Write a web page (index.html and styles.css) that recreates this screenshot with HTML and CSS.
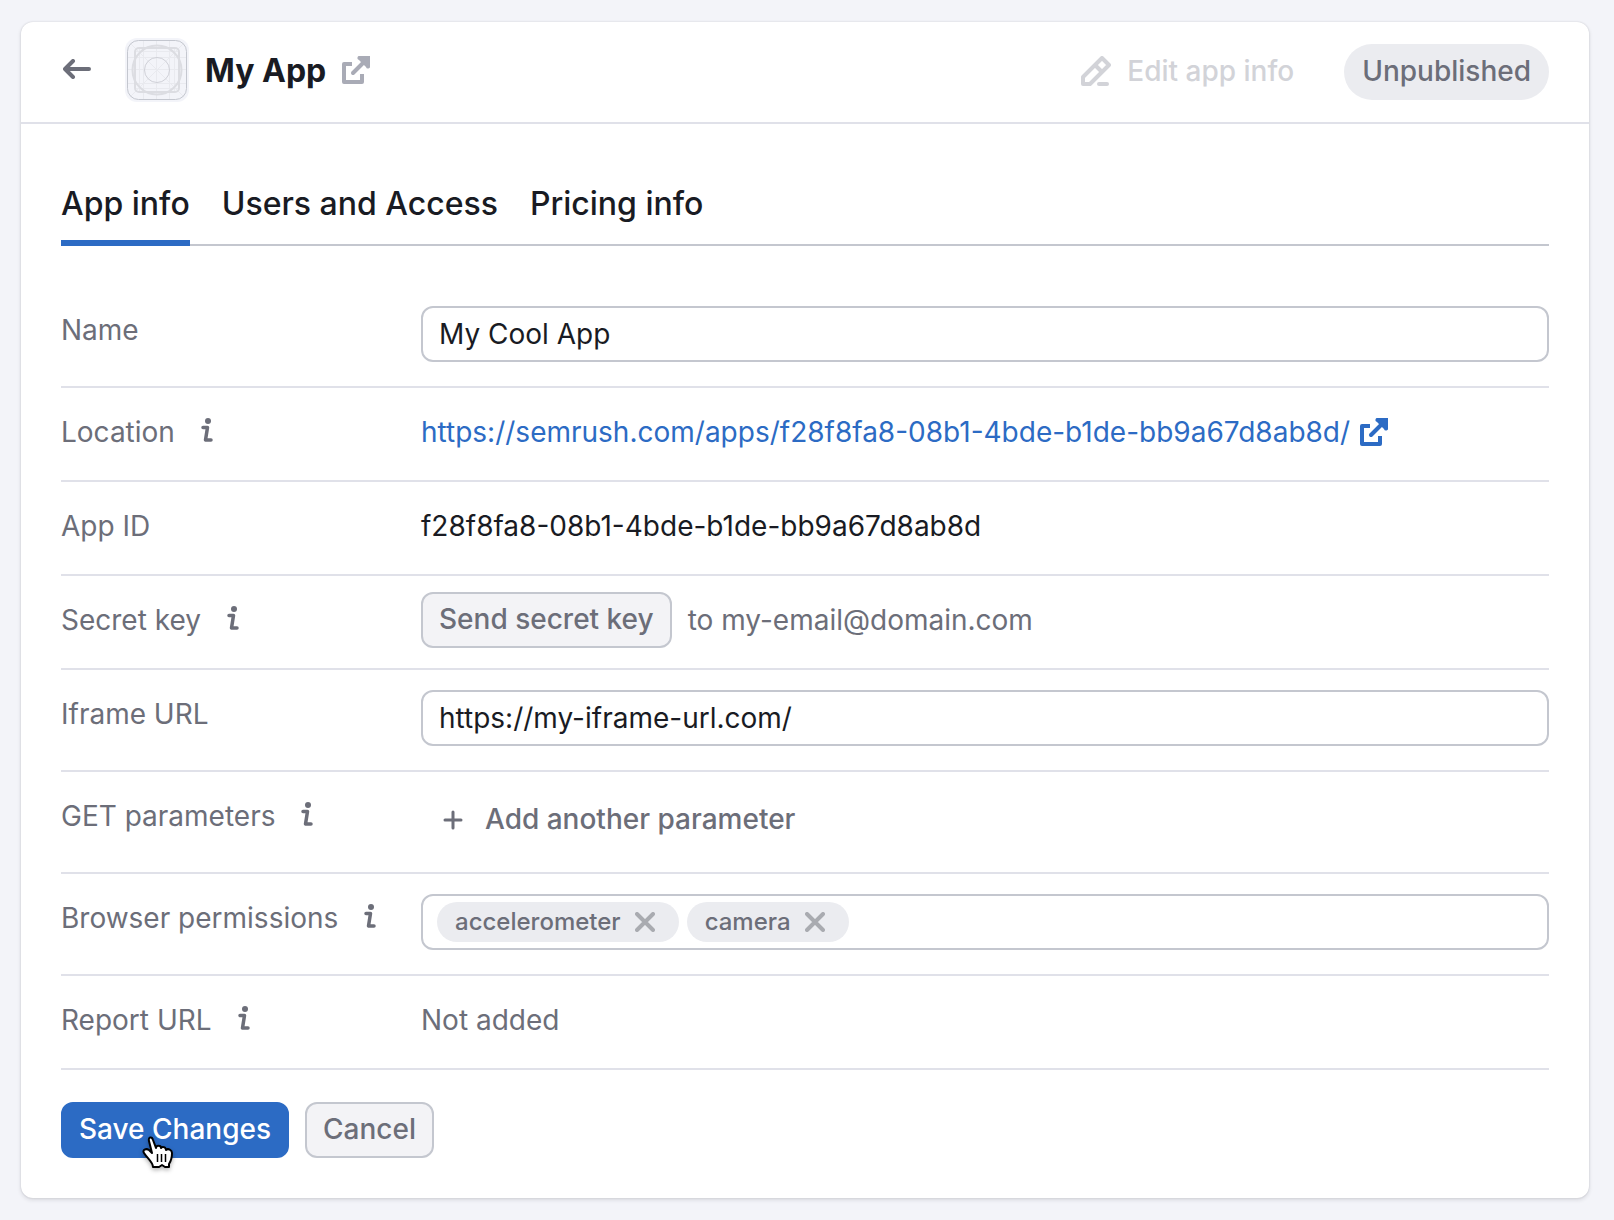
FILE: index.html
```html
<!DOCTYPE html>
<html lang="en">
<head>
<meta charset="utf-8">
<meta name="viewport" content="width=device-width, initial-scale=1">
<title>My App</title>
<link rel="stylesheet" href="styles.css">
</head>
<body>
<svg class="sprite" aria-hidden="true">
  <symbol id="info" viewBox="0 0 12 24">
    <circle cx="7" cy="3" r="3"/>
    <path d="M2 9.500H6.500L4.500 22H10" fill="none" stroke="currentColor" stroke-width="3.500" stroke-linecap="round" stroke-linejoin="round"/>
  </symbol>
  <symbol id="external" viewBox="0 0 28 28">
    <path d="M10 8H2V26H20V18" fill="none" stroke="currentColor" stroke-width="4" stroke-linejoin="round"/>
    <path d="M11 17L25 3" fill="none" stroke="currentColor" stroke-width="4" stroke-linecap="round"/>
    <path d="M18 0H28V10a2 2 0 0 1-4 1L17 4a2 2 0 0 1 1-4z"/>
  </symbol>
  <symbol id="cross" viewBox="0 0 20 20">
    <path d="M2 2L18 18M18 2L2 18" fill="none" stroke="currentColor" stroke-width="4" stroke-linecap="round"/>
  </symbol>
</svg>
<main class="card">
  <header class="header">
    <a class="back" href="#" aria-label="Back">
      <svg width="28" height="20" viewBox="0 0 28 20" fill="none" stroke="currentColor" stroke-width="4" stroke-linecap="round" stroke-linejoin="round"><path d="M26 10H3M10 2L2 10L10 18"/></svg>
    </a>
    <svg class="app-icon" width="64" height="64" viewBox="0 0 64 64" fill="none" aria-hidden="true">
      <rect width="64" height="64" rx="12" fill="#f3f4f9"/>
      <g stroke="#e9eaef">
        <path d="M18.500 2V62M31.500 2V62M44.500 2V62M2 19.500H62M2 31.500H62M2 45.500H62M14.500 10V54M49.500 10V54M10 13.500H54M10 50.500H54"/>
        <path d="M5 5L59 59M59 5L5 59"/>
      </g>
      <g stroke="#dcdde2" stroke-width="2">
        <rect x="10" y="10" width="44" height="44" rx="4"/>
        <circle cx="32" cy="32" r="24.500"/>
        <circle cx="32" cy="32" r="12.500" stroke="#cfd0d7" stroke-width="1"/>
      </g>
      <rect x="2.500" y="2.500" width="59" height="59" rx="11" stroke="#c4c7cf"/>
    </svg>
    <h1 class="title">My App</h1>
    <a class="open" href="#" aria-label="Open app"><svg width="28" height="28" fill="currentColor"><use href="#external"/></svg></a>
    <button class="edit" type="button" disabled>
      <svg width="30" height="30" viewBox="0 0 30 30" fill="none" stroke="currentColor" stroke-width="4" stroke-linejoin="round"><path d="M2 28V21L21 2L28 9L9 28Z"/><path d="M14 9L21 16"/><path d="M18 28H26" stroke-linecap="round"/></svg>
      Edit app info
    </button>
    <span class="status">Unpublished</span>
  </header>
  <div class="content">
    <div class="tabs" role="tablist">
      <button class="tab tab-active" type="button" role="tab" aria-selected="true">App info</button>
      <button class="tab" type="button" role="tab" aria-selected="false">Users and Access</button>
      <button class="tab" type="button" role="tab" aria-selected="false">Pricing info</button>
    </div>
    <form class="form">
      <div class="row">
        <label class="label" for="name">Name</label>
        <div class="control"><input class="input" id="name" type="text" value="My Cool App"></div>
      </div>
      <div class="row">
        <div class="label">Location <svg class="info"><use href="#info"/></svg></div>
        <div class="value"><a class="link" href="#">https://semrush.com/apps/f28f8fa8-08b1-4bde-b1de-bb9a67d8ab8d/<svg width="28" height="28" fill="currentColor"><use href="#external"/></svg></a></div>
      </div>
      <div class="row">
        <div class="label">App ID</div>
        <div class="value">f28f8fa8-08b1-4bde-b1de-bb9a67d8ab8d</div>
      </div>
      <div class="row">
        <div class="label">Secret key <svg class="info"><use href="#info"/></svg></div>
        <div class="control control-tight"><button class="button" type="button">Send secret key</button><span class="muted">to my-email@domain.com</span></div>
      </div>
      <div class="row">
        <label class="label" for="iframe">Iframe URL</label>
        <div class="control"><input class="input" id="iframe" type="text" value="https://my-iframe-url.com/"></div>
      </div>
      <div class="row">
        <div class="label">GET parameters <svg class="info"><use href="#info"/></svg></div>
        <div class="control">
          <button class="add" type="button"><svg width="20" height="20" viewBox="0 0 20 20" fill="none" stroke="currentColor" stroke-width="3" stroke-linecap="round"><path d="M10 2V18M2 10H18"/></svg><span class="add-text">Add another parameter</span></button>
        </div>
      </div>
      <div class="row">
        <label class="label" for="permissions">Browser permissions <svg class="info"><use href="#info"/></svg></label>
        <div class="control">
          <div class="tag-box">
            <span class="tag">accelerometer<button class="remove" type="button" aria-label="Remove accelerometer"><svg width="20" height="20"><use href="#cross"/></svg></button></span>
            <span class="tag">camera<button class="remove" type="button" aria-label="Remove camera"><svg width="20" height="20"><use href="#cross"/></svg></button></span>
            <input class="tag-input" id="permissions" type="text">
          </div>
        </div>
      </div>
      <div class="row">
        <div class="label">Report URL <svg class="info"><use href="#info"/></svg></div>
        <div class="value muted">Not added</div>
      </div>
      <div class="actions">
        <button class="button primary" type="submit">Save Changes
          <svg class="cursor" width="32" height="34" viewBox="0 0 32 34" aria-hidden="true"><path d="M11 31C11 26 5 22 2 17C0 14 4 12 7 14L10 17L7 5C6 1 10 0 11 4L14 12C14 9 19 9 19 12C20 10 24 11 24 14C26 12 30 14 30 17C30 22 29 25 27 28V31H23L20 29L17 31Z" fill="#fff" stroke="#000" stroke-width="2" stroke-linejoin="round"/><path d="M15.500 18V26M19.500 18V26M23.500 18V26" stroke="#000" stroke-width="1.500"/></svg>
        </button>
        <button class="button" type="button">Cancel</button>
      </div>
    </form>
  </div>
</main>
</body>
</html>
```
FILE: styles.css
```css
* { box-sizing: border-box; }

body {
  margin: 0;
  padding: 22px 25px 22px 21px;
  background: #f3f4f9;
  color: #191b23;
  font: 28px/40px Inter, "Liberation Sans", sans-serif;
}

button, input { font: inherit; color: inherit; }
button { margin: 0; padding: 0; border: 0; background: none; white-space: nowrap; }
svg { display: block; flex: none; }
.sprite { position: absolute; width: 0; height: 0; }

.card {
  background: #fff;
  border-radius: 12px;
  box-shadow: 0 0 2px rgba(25, 27, 35, 0.16), 0 2px 4px rgba(25, 27, 35, 0.12);
}

.header {
  display: flex;
  align-items: center;
  min-height: 102px;
  padding: 0 40px;
  border-bottom: 2px solid #e0e1e9;
}
.back { margin: 0 34px 0 2px; padding-bottom: 6px; color: #6c6e79; }
.app-icon { margin: -4px 16px 0 0; }
.title { margin: 0; padding-bottom: 2px; font-size: 32px; font-weight: 700; }
.open { margin-left: 16px; padding-bottom: 4px; color: #a9abb6; }
.edit {
  display: flex;
  align-items: center;
  gap: 16px;
  margin-left: auto;
  padding-bottom: 2px;
  color: #d2d3d8;
  font-weight: 500;
}
.status {
  margin-left: 50px;
  padding: 7px 18px 9px;
  border-radius: 28px;
  background: #ebecf0;
  color: #6c6e79;
  font-weight: 500;
}

.content { padding: 50px 40px 40px; }

.tabs { display: flex; gap: 32px; box-shadow: inset 0 -2px #c4c7cf; }
.tab {
  padding: 10px 0 16px;
  border-bottom: 6px solid transparent;
  font-size: 32px;
  font-weight: 500;
}
.tab-active { border-color: #2c6bc4; }

.form { margin-top: 40px; }
.row {
  display: flex;
  min-height: 94px;
  border-bottom: 2px solid #e0e1e9;
}
.label {
  display: flex;
  flex: none;
  width: 360px;
  padding-top: 24px;
  gap: 26px;
  color: #6c6e79;
}
.info { width: 12px; height: 24px; margin-top: 6px; fill: currentColor; }
.value { flex: 1; padding-top: 24px; }
.control { display: flex; flex: 1; padding: 20px 0 24px; }
.control-tight { gap: 16px; align-items: center; padding: 16px 0 20px; }
.muted { color: #6c6e79; }

.input, .tag-box {
  flex: 1;
  min-width: 0;
  height: 56px;
  padding: 0 16px;
  border: 2px solid #c4c7cf;
  border-radius: 12px;
  background: #fff;
}
.link {
  display: inline-flex;
  align-items: center;
  gap: 10px;
  color: #2c6bc4;
  text-decoration: none;
}

.button {
  height: 56px;
  padding: 0 16px 2px;
  border: 2px solid #c4c7cf;
  border-radius: 12px;
  background: #f3f3f6;
  color: #6c6e79;
  font-weight: 500;
}
.primary {
  position: relative;
  border-color: #2c6bc4;
  background: #2c6bc4;
  color: #fff;
}
.cursor {
  position: absolute;
  left: 79px;
  top: 32px;
  filter: drop-shadow(0 2px 2px rgba(0, 0, 0, 0.3));
}

.add {
  display: flex;
  align-items: center;
  gap: 22px;
  height: 56px;
  padding-left: 22px;
  color: #6c6e79;
  font-weight: 500;
}
.add-text { padding-bottom: 2px; }

.tag-box { display: flex; align-items: center; gap: 8px; padding: 0 14px; }
.tag {
  display: flex;
  align-items: center;
  gap: 14px;
  height: 40px;
  padding: 0 24px 0 18px;
  border-radius: 20px;
  background: #ebecf0;
  color: #6c6e79;
  font-size: 24px;
  font-weight: 500;
}
.remove { color: #a9abb0; }
.tag-input { flex: 1; min-width: 0; border: 0; outline: 0; background: none; }

.actions { display: flex; gap: 16px; padding-top: 32px; }
```
